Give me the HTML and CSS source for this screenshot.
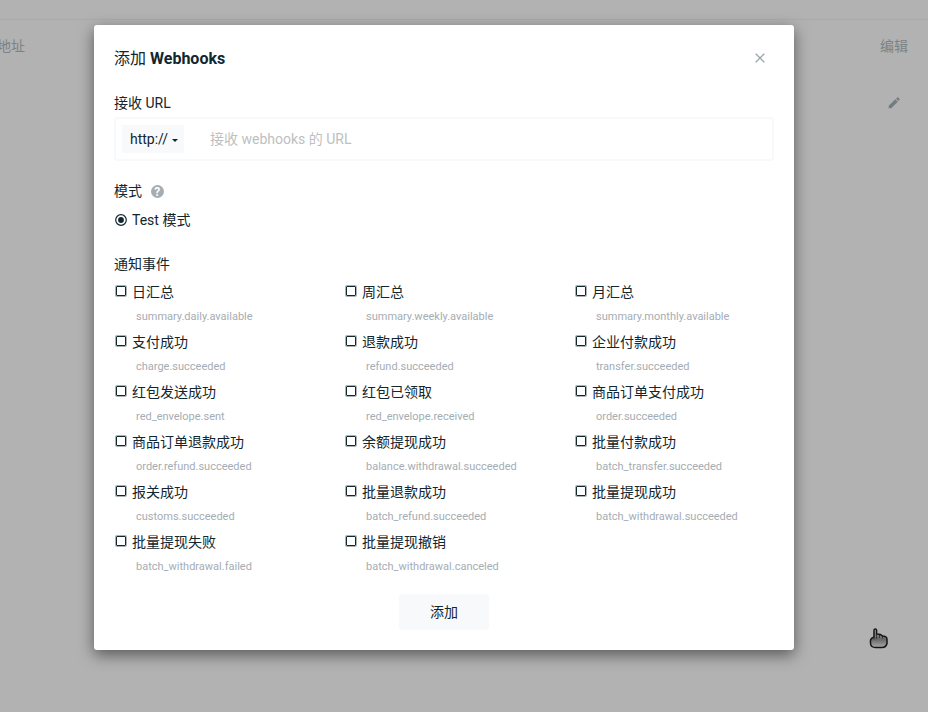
FILE: index.html
```html
<!DOCTYPE html>
<html lang="zh-CN">
<head>
<meta charset="utf-8">
<title>Webhooks</title>
<link rel="stylesheet" href="styles.css">
</head>
<body>
<div class="page">
  <div class="page-top"></div>
  <div class="page-head"><span class="col-address">地址</span><span>编辑</span></div>
  <div class="page-row">
    <svg class="pencil" viewBox="0 0 12 12"><path d="M.7 8.800 7.300 2.200l2.500 2.500-6.600 6.600H.7zM8 1.500 9.300.5q.5-.4.900 0l1.300 1.300q.4.400 0 .9l-1 1.300z"/></svg>
  </div>
</div>
<div class="modal">
  <header class="modal-head">
    <h1><span>添加</span> Webhooks</h1>
    <svg class="close" viewBox="0 0 10 10"><path d="M.7.7l8.600 8.600M9.300.7.7 9.300"/></svg>
  </header>
  <div class="label label-url">接收 URL</div>
  <div class="url-field">
    <span class="protocol">http://<i class="caret"></i></span>
    <span class="placeholder">接收 webhooks 的 URL</span>
  </div>
  <div class="label label-mode">模式<span class="help">?</span></div>
  <div class="mode"><svg class="radio" viewBox="0 0 12 12"><circle class="ring" cx="6" cy="6" r="5.300"/><circle cx="6" cy="6" r="2.900"/></svg>Test 模式</div>
  <div class="label label-events">通知事件</div>
  <div class="events">
    <div class="event"><div class="name"><i class="box"></i>日汇总</div><div class="code">summary.daily.available</div></div>
    <div class="event"><div class="name"><i class="box"></i>周汇总</div><div class="code">summary.weekly.available</div></div>
    <div class="event"><div class="name"><i class="box"></i>月汇总</div><div class="code">summary.monthly.available</div></div>
    <div class="event"><div class="name"><i class="box"></i>支付成功</div><div class="code">charge.succeeded</div></div>
    <div class="event"><div class="name"><i class="box"></i>退款成功</div><div class="code">refund.succeeded</div></div>
    <div class="event"><div class="name"><i class="box"></i>企业付款成功</div><div class="code">transfer.succeeded</div></div>
    <div class="event"><div class="name"><i class="box"></i>红包发送成功</div><div class="code">red_envelope.sent</div></div>
    <div class="event"><div class="name"><i class="box"></i>红包已领取</div><div class="code">red_envelope.received</div></div>
    <div class="event"><div class="name"><i class="box"></i>商品订单支付成功</div><div class="code">order.succeeded</div></div>
    <div class="event"><div class="name"><i class="box"></i>商品订单退款成功</div><div class="code">order.refund.succeeded</div></div>
    <div class="event"><div class="name"><i class="box"></i>余额提现成功</div><div class="code">balance.withdrawal.succeeded</div></div>
    <div class="event"><div class="name"><i class="box"></i>批量付款成功</div><div class="code">batch_transfer.succeeded</div></div>
    <div class="event"><div class="name"><i class="box"></i>报关成功</div><div class="code">customs.succeeded</div></div>
    <div class="event"><div class="name"><i class="box"></i>批量退款成功</div><div class="code">batch_refund.succeeded</div></div>
    <div class="event"><div class="name"><i class="box"></i>批量提现成功</div><div class="code">batch_withdrawal.succeeded</div></div>
    <div class="event"><div class="name"><i class="box"></i>批量提现失败</div><div class="code">batch_withdrawal.failed</div></div>
    <div class="event"><div class="name"><i class="box"></i>批量提现撤销</div><div class="code">batch_withdrawal.canceled</div></div>
  </div>
  <button class="submit" type="button">添加</button>
</div>
<svg class="pointer" viewBox="0 0 20 22">
  <defs><linearGradient id="hand" x1="0" y1="0" x2="0" y2="1"><stop offset="0" stop-color="#aaa"/><stop offset=".55" stop-color="#666"/><stop offset="1" stop-color="#aaa"/></linearGradient></defs>
  <path class="hand" d="M5 9V2.500Q5 1 6.300 1T7.600 2.500V6q4-.2 6 2 4 0 4.400 3v4.500q-1 4-5 4H6.500q-4.500 0-5-4V12Q2 10 5 9z"/>
  <path class="fingers" d="M5 9v2.500M7.600 6v5M10.500 7v3M13.500 8v2.500"/>
</svg>
</body>
</html>
```
FILE: styles.css
```css
* { box-sizing: border-box; }
body {
  margin: 0;
  height: 712px;
  overflow: hidden;
  position: relative;
  background: #b2b2b2;
  color: #11262d;
  font: 14px/20px Roboto, "Noto Sans CJK SC", sans-serif;
}
.page-top { height: 20px; border-bottom: 1px solid #a9aaab; }
.page-head {
  display: flex;
  justify-content: space-between;
  padding: 16px 20px 0 0;
  color: #7b8286;
}
.col-address { margin-left: -3px; }
.page-row { display: flex; justify-content: flex-end; padding: 41px 28px 0 0; }
.pencil { width: 12px; height: 12px; fill: #747c80; }

.modal {
  position: absolute;
  left: 94px;
  top: 25px;
  width: 700px;
  height: 625px;
  padding: 24px 20px 20px;
  border-radius: 3px;
  background: #fff;
  box-shadow: 0 5px 15px rgba(0, 0, 0, .5);
}
.modal-head { display: flex; justify-content: space-between; padding-right: 9px; }
h1 { margin: 0; font-size: 16px; line-height: 20px; font-weight: 700; }
h1 span { font-weight: 400; }
.close { width: 10px; height: 10px; margin-top: 3.5px; fill: none; stroke: #9ba5ab; stroke-width: 1.3; }
.label-url { margin-top: 24px; }
.url-field {
  display: flex;
  align-items: center;
  height: 44px;
  margin-top: 4px;
  padding: 0 6px;
  border: 2px solid #f8f9fa;
  border-radius: 3px;
}
.protocol {
  display: flex;
  align-items: center;
  width: 62px;
  height: 28px;
  padding-left: 8px;
  background: #f8f9fb;
}
.caret { margin: 2px 0 0 4px; border: 3px solid transparent; border-top-color: #11262d; border-bottom: 0; }
.placeholder { margin-left: 26px; color: #bdbfc1; }
.label-mode { display: flex; align-items: center; margin-top: 20px; }
.help {
  width: 13.5px;
  height: 13.5px;
  margin: .5px 0 0 8.500px;
  border-radius: 50%;
  background: #a5adb3;
  color: #fff;
  font-size: 12px;
  font-weight: 700;
  line-height: 14px;
  text-align: center;
}
.mode { display: flex; align-items: center; margin-top: 9px; }
.radio { width: 12px; height: 12px; margin: -1px 5px 0 1px; fill: #11262d; }
.ring { fill: none; stroke: #11262d; stroke-width: 1.2; }
.label-events { margin-top: 24px; }
.events { display: grid; grid-template-columns: repeat(3, 230px); grid-auto-rows: 50px; margin-top: 8px; }
.name { display: flex; align-items: center; white-space: nowrap; }
.box {
  width: 10px;
  height: 10px;
  margin: -2px 6px 0 2px;
  border: 1px solid #11262d;
  border-radius: 1px;
  box-shadow: 0 0 0 1px rgba(17, 38, 45, .35);
}
.code { margin: 5px 0 0 22px; color: #a5adb3; font-size: 11px; line-height: 18px; padding-top: 1px; }
.submit {
  display: block;
  width: 90px;
  height: 36px;
  margin: 12px auto 0;
  padding: 0;
  border: 0;
  border-radius: 3px;
  background: #f8f9fb;
  color: inherit;
  font: inherit;
}
.pointer { position: absolute; left: 869px; top: 628px; width: 20px; height: 22px; }
.hand { fill: url(#hand); stroke: #151515; stroke-width: 1.5; }
.fingers { fill: none; stroke: #222; stroke-width: .8; }
```
